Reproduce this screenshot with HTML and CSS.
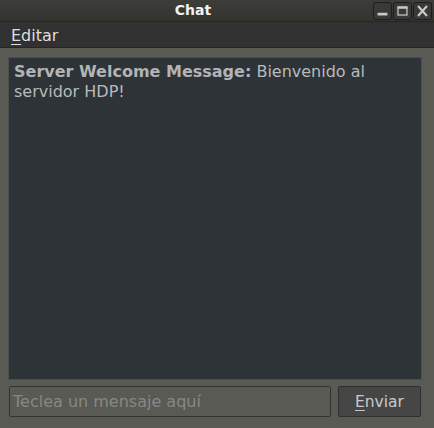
FILE: index.html
```html
<!DOCTYPE html>
<html>
<head>
<meta charset="utf-8">
<link rel="stylesheet" href="styles.css">
</head>
<body>
<div class="window">
  <div class="titlebar">
    <span class="title">Chat</span>
    <div class="wbtns">
      <span class="wbtn"><svg width="19" height="18" viewBox="0 0 19 18"><rect x="4" y="11" width="11" height="3" fill="#c9c9c9"/></svg></span>
      <span class="wbtn"><svg width="19" height="18" viewBox="0 0 19 18"><rect x="4.5" y="4.5" width="10" height="9" fill="none" stroke="#c9c9c9" stroke-width="1.4"/><rect x="4" y="4" width="11" height="2.5" fill="#c9c9c9"/></svg></span>
      <span class="wbtn"><svg width="19" height="18" viewBox="0 0 19 18"><path d="M4.5 3.5 L14.5 14.5 M14.5 3.5 L4.5 14.5" stroke="#c9c9c9" stroke-width="2.4"/></svg></span>
    </div>
  </div>
  <div class="menubar"><span class="menuitem"><u>E</u>ditar</span></div>
  <div class="content">
    <div class="log"><b>Server Welcome Message:</b> Bienvenido al servidor HDP!</div>
    <div class="bottom">
      <div class="entry">Teclea un mensaje aquí</div>
      <div class="button"><u>E</u>nviar</div>
    </div>
  </div>
</div>
</body>
</html>
```
FILE: styles.css
```css
html, body {
  margin: 0;
  padding: 0;
  background: #595a54;
}
.window {
  width: 434px;
  height: 428px;
  display: flex;
  flex-direction: column;
  font-family: "DejaVu Sans", sans-serif;
  background: #595a54;
}
.titlebar {
  height: 22px;
  flex: none;
  background: linear-gradient(#3d3d3a, #32322f);
  border-bottom: 1px solid #252525;
  position: relative;
  display: flex;
  align-items: center;
  justify-content: center;
  box-sizing: border-box;
  padding-right: 48px;
}
.title {
  color: #f2f2f2;
  font-weight: bold;
  font-size: 14px;
  margin-top: -1px;
}
.wbtns {
  position: absolute;
  right: 2px;
  top: 2px;
  display: flex;
  gap: 1px;
}
.wbtn {
  width: 19px;
  height: 18px;
  box-sizing: border-box;
  border: 1px solid #1e1e1d;
  border-radius: 3px;
  background: #393936;
  display: flex;
  align-items: center;
  justify-content: center;
  overflow: hidden;
}
.wbtn svg { display: block; }
.menubar {
  height: 25px;
  flex: none;
  background: #313131;
  border-bottom: 1px solid #252525;
  display: flex;
  align-items: center;
  padding-left: 11px;
}
.menuitem {
  color: #dedede;
  font-size: 16px;
  margin-top: 1px;
}
.menuitem u { text-underline-offset: 3px; }
.content {
  flex: 1;
  display: flex;
  flex-direction: column;
  padding: 10px 13px 11px 9px;
  gap: 7px;
  min-height: 0;
}
.log {
  flex: 1;
  background: #2d3336;
  box-shadow: 0 0 0 1px #4d4f4a;
  color: #b9babb;
  font-size: 16px;
  line-height: 20px;
  padding: 4px 5px;
}
.log b { color: #b3b4b5; }
.bottom {
  height: 31px;
  flex: none;
  display: flex;
  gap: 7px;
}
.entry {
  width: 322px;
  box-sizing: border-box;
  border: 1px solid #333431;
  border-radius: 2px;
  background: #595a54;
  color: #878884;
  font-size: 16px;
  display: flex;
  align-items: center;
  padding-left: 3px;
}
.button {
  flex: 1;
  box-sizing: border-box;
  border: 1px solid #2f2f2e;
  border-radius: 2px;
  background: #464646;
  color: #c9c9c9;
  font-size: 15.5px;
  display: flex;
  align-items: center;
  justify-content: center;
}
.button u { text-underline-offset: 3px; }
```
